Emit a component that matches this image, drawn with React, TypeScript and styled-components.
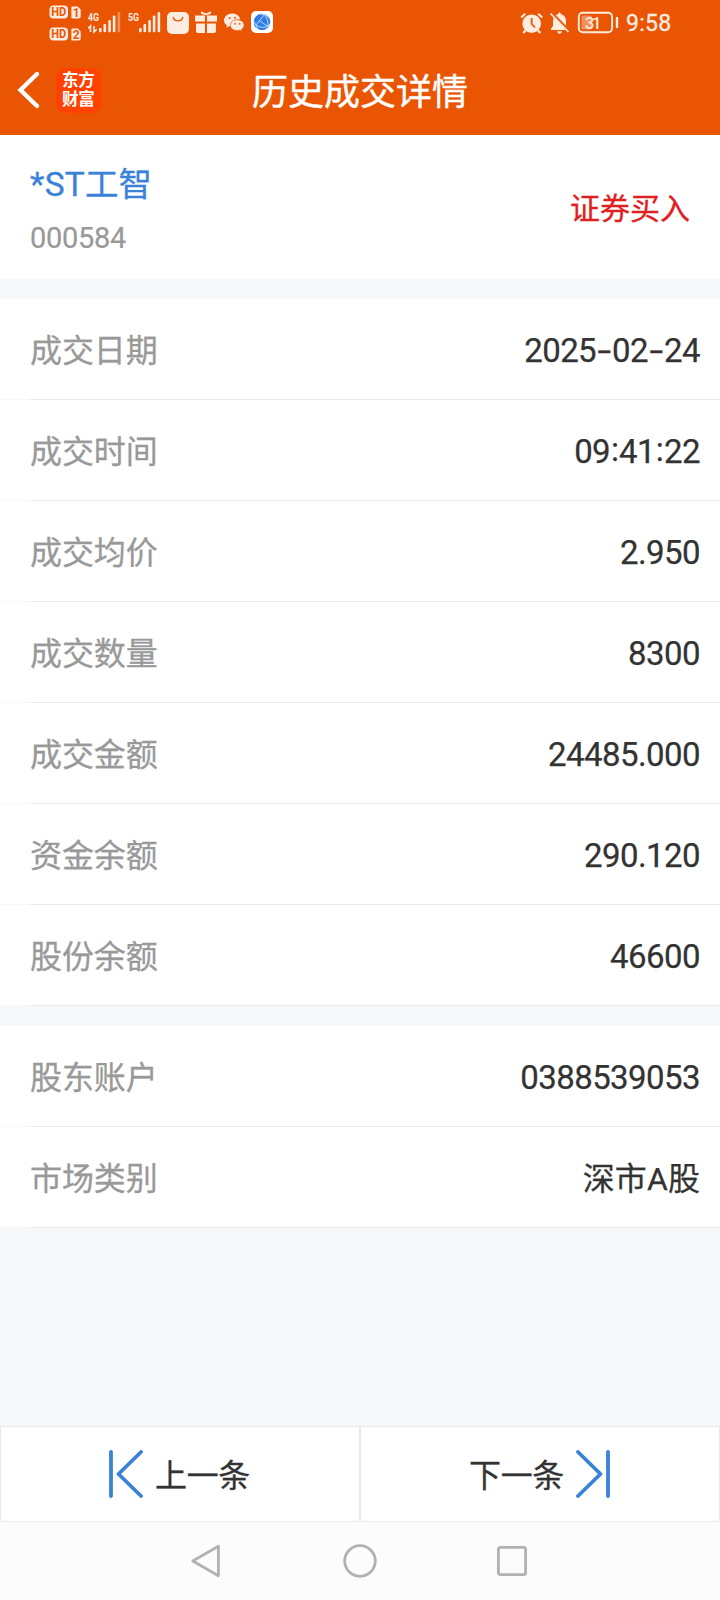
import React from 'react';
import styled, { createGlobalStyle } from 'styled-components';

const sans = `Roboto, "Noto Sans CJK SC", sans-serif`;
const cream = '#ffece0';
const orange = '#ea5504';
const blue = '#3a82d8';

const GlobalStyle = createGlobalStyle`
  *, *::before, *::after { box-sizing: border-box; }
  body { margin: 0; background: #f6f8fa; font-family: ${sans}; }
  svg { display: block; flex: none; }
`;

const Screen = styled.div`
  width: 720px;
  height: 1600px;
  display: flex;
  flex-direction: column;
  overflow: hidden;
  background: #f6f8fa;
  color: #333;
`;

const StatusBar = styled.div`
  height: 45px;
  display: flex;
  justify-content: space-between;
  padding: 0 49px;
  background: ${orange};
`;

const StatusGroup = styled.div`
  display: flex;
  height: 45px;
`;

const Clock = styled.span`
  width: 45px;
  margin-left: 7px;
  font-size: 23px;
  line-height: 47px;
  letter-spacing: 0.3px;
  color: ${cream};
  -webkit-text-stroke: 0.3px ${cream};
  white-space: nowrap;
`;

const TitleBar = styled.header`
  height: 90px;
  display: grid;
  grid-template-columns: 160px 1fr 160px;
  align-items: center;
  background: ${orange};
`;

const TitleLeft = styled.div`
  display: flex;
  align-items: center;
  padding-left: 16px;
  gap: 15px;
`;

const Brand = styled.div`
  width: 45px;
  height: 45px;
  padding: 3px 0 0 6px;
  border-radius: 9px;
  background: #ff4200;
  color: #fff;
  font-size: 16.5px;
  font-weight: 700;
  line-height: 19px;
  letter-spacing: -0.2px;
  white-space: pre-line;
`;

const Title = styled.h1`
  margin: 0;
  padding-top: 5px;
  text-align: center;
  font-size: 36px;
  line-height: 54px;
  font-weight: 400;
  -webkit-text-stroke: 0.4px #fff;
  color: #fff;
  white-space: nowrap;
`;

const Summary = styled.section`
  height: 144px;
  display: flex;
  justify-content: space-between;
  align-items: center;
  padding: 4px 30px 0;
  background: #fff;
  margin-bottom: 20px;
`;

const Stock = styled.div`
  display: flex;
  flex-direction: column;
  padding-top: 5px;
`;

const StockName = styled.span`
  font-size: 33.5px;
  line-height: 54px;
  letter-spacing: 0.2px;
  color: ${blue};
  -webkit-text-stroke: 0.3px ${blue};
`;

const StockCode = styled.span`
  font-size: 29px;
  line-height: 53px;
  letter-spacing: -0.3px;
  color: #999;
  -webkit-text-stroke: 0.2px #999;
`;

const Side = styled.span`
  font-size: 30px;
  line-height: 44px;
  color: #e02020;
  -webkit-text-stroke: 0.3px #e02020;
`;

const Group = styled.section`
  background: #fff;
  margin-bottom: 20px;
`;

const Row = styled.div`
  height: 101px;
  display: flex;
  justify-content: space-between;
  align-items: center;
  padding: 2px 20px 0 30px;
  background: linear-gradient(#ebebeb, #ebebeb) 30px 100px / 690px 1px no-repeat,
    linear-gradient(#f8f8f9, #f8f8f9) 0 100px / 30px 1px no-repeat;
`;

const Label = styled.span`
  font-size: 32px;
  line-height: 48px;
  letter-spacing: -0.1px;
  color: #999;
  -webkit-text-stroke: 0.3px #999;
`;

const Value = styled.span<{ $cjk?: boolean }>`
  display: flex;
  font-size: ${(p) => (p.$cjk ? '32px' : '33px')};
  line-height: 48px;
  letter-spacing: ${(p) => (p.$cjk ? '0.1px' : '-0.57px')};
  color: #333;
  -webkit-text-stroke: 0.25px #333;
`;

const Mark = styled.span<{ $colon?: boolean }>`
  width: ${(p) => (p.$colon ? '9px' : '16px')};
  text-align: center;
  transform: ${(p) => (p.$colon ? 'translateY(-2px)' : 'scaleX(1.5)')};
`;

const Spacer = styled.div`
  flex: 1;
`;

const Pager = styled.div`
  height: 96px;
  display: grid;
  grid-template-columns: 1fr 1fr;
  background: #fff;
  border: 1px solid #ebebeb;
`;

const PagerButton = styled.button<{ $edge: 'left' | 'right' }>`
  display: flex;
  align-items: center;
  justify-content: center;
  gap: 12px;
  padding: 0 1px 0 0;
  border: 0;
  border-${(p) => p.$edge}: 1px solid #ebebeb;
  background: #fff;
  color: #333;
  font-family: ${sans};
  font-size: 32px;
  line-height: 48px;
  letter-spacing: -0.3px;
  -webkit-text-stroke: 0.3px #333;
`;

const PagerLabel = styled.span`
  padding-top: 4px;
`;

const SystemNav = styled.nav`
  height: 78px;
  display: flex;
  justify-content: center;
  align-items: center;
  gap: 118px;
  background: #fcfcfc;
`;

const Signal = ({ kind, x, faded, arrows }: { kind: string; x: number[]; faded?: boolean; arrows?: boolean }) => (
  <svg width="34" height="45" viewBox="0 0 34 45" fill={cream}>
    <text x="0" y="20.500" fontSize="11" fontFamily="Roboto" fontWeight="700" textLength="11" lengthAdjust="spacingAndGlyphs">{kind}</text>
    {x.map((v, i) => {
      const top = [28, 24, 20, 15.5, 12][i];
      return <rect key={v} x={v} y={top} width="2.600" height={32.2 - top} rx="1" opacity={faded && i === 4 ? 0.4 : 1} />;
    })}
    {arrows && <path d="M0 28.500 2.500 26v6M6 26v6l2.700-2.700" fill="none" stroke={cream} strokeWidth="1.600" />}
  </svg>
);

const StatusLeft = () => (
  <StatusGroup>
    <svg width="39" height="45" viewBox="0 0 39 45" fontFamily="Roboto" fontWeight="700" fontSize="12">
      {[0, 1].map((i) => (
        <g key={i} transform={`translate(0 ${i * 22})`}>
          <rect x=".5" y="5.500" width="18.500" height="13" rx="4" fill={cream} />
          <text x="2.200" y="16.300" fill={orange} textLength="15" lengthAdjust="spacingAndGlyphs">HD</text>
          <path d="M23.200 6.500h5.500l3 3v7a2 2 0 0 1-2 2h-6.500a.8.8 0 0 1-.8-.8V7.300a.8.8 0 0 1 .8-.8Z" fill={cream} />
          <text x="23.800" y="16.600" fill={orange}>{i + 1}</text>
        </g>
      ))}
    </svg>
    <Signal kind="4G" x={[11, 15.5, 20.3, 24.8, 29.6]} faded arrows />
    <svg width="6" height="45" />
    <Signal kind="5G" x={[11, 15.5, 20.3, 24.8, 29.6]} />
    <svg width="89" height="45" viewBox="162 0 89 45">
      <rect x="167" y="12" width="22" height="22" rx="5" fill={cream} />
      <path d="M173.300 17.500a4.800 4.200 0 0 0 9.400 0" fill="none" stroke={orange} strokeWidth="1.300" strokeLinecap="round" />
      <g transform="translate(-5 0)">
        <path d="M200 15.500h10v6h-10zM212 15.500h10v6h-10zM201 23.500h9v9.500h-7a2 2 0 0 1-2-2zM212 23.500h9V31a2 2 0 0 1-2 2h-7zM206 11.200l5 2.300 5-2.300v2.500l-5 1.500-5-1.500z" fill={cream} />
      </g>
      <g transform="translate(-3.500 0)">
        <path d="M236 13.500c-4.800 0-8.500 3-8.500 6.800 0 2.200 1.200 4 3 5.200l-.7 2.200 2.700-1.400c.9.200 1.800.4 2.800.4-.8-4.500 3.200-7.400 8.500-7.400-.6-3.300-3.900-5.800-7.800-5.800Z" fill={cream} />
        <path d="M240.800 19.800c-4 0-7 2.400-7 5.400s3 5.400 7 5.400c.8 0 1.500-.1 2.200-.3l2.400 1.200-.6-2c1.800-1.100 2.800-2.600 2.800-4.300 0-3-3-5.400-6.800-5.400Z" fill={cream} stroke={orange} strokeWidth=".7" />
        <g fill={orange}>
          <circle cx="233.200" cy="18" r="1" />
          <circle cx="238.500" cy="17.800" r="1" />
          <circle cx="238.500" cy="23.800" r=".9" />
          <circle cx="243.200" cy="23.800" r=".9" />
        </g>
      </g>
    </svg>
    <svg width="22" height="45" viewBox="0 -11 22 45">
      <rect width="22" height="22" rx="5" fill="#fff" />
      <circle cx="11" cy="11" r="8.300" fill="#2f7de8" />
      <path d="M13.500 3.500 5 14c3 2.500 8 3 12 1.500C17.500 11 16 6.500 13.500 3.500ZM3 10.500 5 14l2 4.300M17 15.500l1.800-2.500M9 3l4.500.5 3.500 2M8 9.500l9 6" fill="none" stroke="#c4e0ff" strokeWidth=".9" />
    </svg>
  </StatusGroup>
);

const StatusRight = () => (
  <StatusGroup>
    <svg width="99" height="45" viewBox="520 0 99 45" fill="none" stroke={cream}>
      <circle cx="531.700" cy="23.700" r="9.300" fill={cream} stroke="none" />
      <path d="m521.200 17.500 4-3.700M542.200 17.500l-4-3.700M525.500 30.500l-2.300 2.500M538 30.500l2.300 2.500" strokeWidth="2.200" />
      <path d="M531.700 18v6l3.300 3.500" stroke={orange} strokeWidth="1.800" />
      <path d="M559.500 12.500c.8 0 1.300.6 1.300 1.500 3.300.8 5.200 3.300 5.200 7v5l2 2.500v1.500h-17V28.500l2-2.500v-5c0-3.700 1.900-6.200 5.200-7 0-.9.500-1.500 1.300-1.500ZM557 31.300h5c-.3 1.600-1.300 2.500-2.500 2.500s-2.200-.9-2.500-2.500Z" fill={cream} stroke="none" />
      <path d="m552 13 17 17.500" stroke={orange} strokeWidth="2.500" />
      <path d="m550.500 13.500 18 18.500" strokeWidth="1.700" />
      <rect x="578.800" y="12.800" width="33.300" height="19.500" rx="4" strokeWidth="1.900" />
      <rect x="581.500" y="15.500" width="10" height="14" rx="1.500" fill={cream} opacity=".4" stroke="none" />
      <text x="585" y="28.500" fontFamily="Roboto" fontSize="16.500" fontWeight="500" fill={cream} stroke="none" textLength="16.500">31</text>
      <path d="M617 18v9" strokeWidth="2.400" strokeLinecap="round" />
    </svg>
    <Clock>9:58</Clock>
  </StatusGroup>
);

const groups: [string, string][][] = [
  [
    ['成交日期', '2025-02-24'],
    ['成交时间', '09:41:22'],
    ['成交均价', '2.950'],
    ['成交数量', '8300'],
    ['成交金额', '24485.000'],
    ['资金余额', '290.120'],
    ['股份余额', '46600'],
  ],
  [
    ['股东账户', '0388539053'],
    ['市场类别', '深市A股'],
  ],
];

const ValueText = ({ text }: { text: string }) => (
  <Value $cjk={/[^\x00-\x7f]/.test(text)}>
    {text.split(/([-:])/).map((part, i) =>
      part === '-' || part === ':' ? (
        <Mark key={i} $colon={part === ':'}>{part}</Mark>
      ) : (
        <span key={i}>{part}</span>
      ),
    )}
  </Value>
);

export default function App() {
  return (
    <Screen>
      <GlobalStyle />
      <StatusBar>
        <StatusLeft />
        <StatusRight />
      </StatusBar>
      <TitleBar>
        <TitleLeft>
          <svg width="25" height="40" viewBox="0 0 25 40" fill="none" stroke="#fff" strokeWidth="4.400" strokeLinecap="round">
            <path d="M21 4 4.500 20 21 36" />
          </svg>
          <Brand>{'东方\n财富'}</Brand>
        </TitleLeft>
        <Title>历史成交详情</Title>
      </TitleBar>
      <Summary>
        <Stock>
          <StockName>*ST工智</StockName>
          <StockCode>000584</StockCode>
        </Stock>
        <Side>证券买入</Side>
      </Summary>
      {groups.map((rows, i) => (
        <Group key={i}>
          {rows.map(([label, value]) => (
            <Row key={label}>
              <Label>{label}</Label>
              <ValueText text={value} />
            </Row>
          ))}
        </Group>
      ))}
      <Spacer />
      <Pager>
        <PagerButton $edge="right">
          <svg width="34" height="48" viewBox="0 0 34 48" fill="none" stroke={blue} strokeWidth="3.800" strokeLinecap="round" strokeLinejoin="round">
            <path d="M2 2v44M32 2 9.500 24 32 46" />
          </svg>
          <PagerLabel>上一条</PagerLabel>
        </PagerButton>
        <PagerButton $edge="left">
          <PagerLabel>下一条</PagerLabel>
          <svg width="34" height="48" viewBox="0 0 34 48" fill="none" stroke={blue} strokeWidth="3.800" strokeLinecap="round" strokeLinejoin="round">
            <path d="M32 2v44M2 2l22.500 22L2 46" />
          </svg>
        </PagerButton>
      </Pager>
      <SystemNav>
        <svg width="34" height="34" viewBox="0 0 34 34" fill="none" stroke="#b1b1b1" strokeWidth="2.800" strokeLinejoin="round">
          <path d="M27.400 2.200v29.600L1.800 17Z" />
        </svg>
        <svg width="34" height="34" viewBox="0 0 34 34" fill="none" stroke="#b1b1b1" strokeWidth="2.800">
          <circle cx="17" cy="17" r="15.300" />
        </svg>
        <svg width="34" height="34" viewBox="0 0 34 34" fill="none" stroke="#b1b1b1" strokeWidth="2.800">
          <rect x="3.400" y="3.400" width="27.200" height="27.200" rx="2" />
        </svg>
      </SystemNav>
    </Screen>
  );
}
